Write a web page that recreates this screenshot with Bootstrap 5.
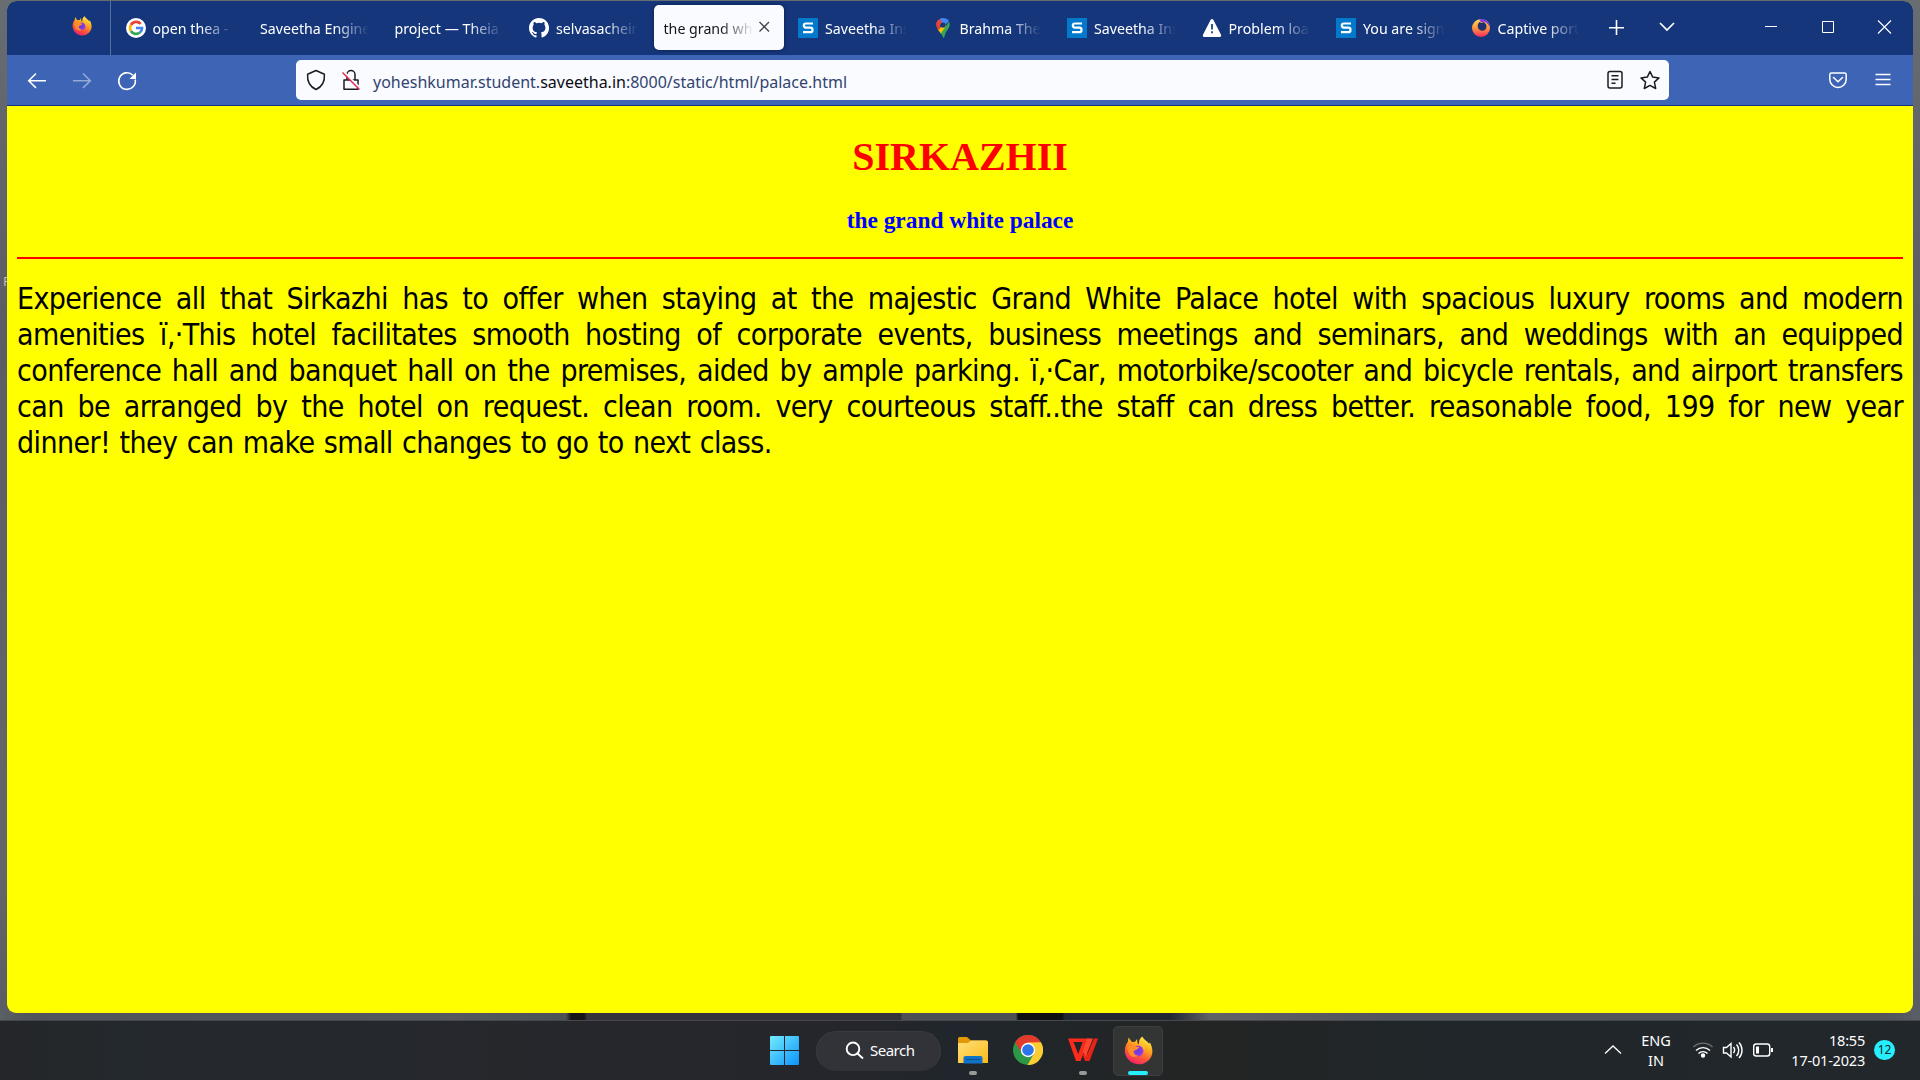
<!DOCTYPE html>
<html lang="en">
<head>
<meta charset="utf-8">
<title>the grand white palace</title>
<link href="https://cdn.jsdelivr.net/npm/bootstrap@5.3.0/dist/css/bootstrap.min.css" rel="stylesheet">
<style>
body{width:1920px;height:1080px;overflow:hidden;font-family:"Noto Sans",sans-serif;font-size:14px;color:#fff;
 background:linear-gradient(90deg,#5b6064 0,#50545b 30px,#55595e 450px,#4d5257 566px,#151517 571px,#151517 584px,#35333c 587px,#35333c 901px,#4d5156 902px,#4d5156 1016px,#101012 1018px,#101012 1062px,#212631 1065px,#212631 1170px,#606266 1210px,#52535b 1400px,#52535b 1880px,#5a5e66 1920px) 0 1012px/1920px 8px no-repeat,linear-gradient(#686d71,#5a5d65 30%,#63676c 80%,#555960)}
svg{display:block;flex:none}
.desk-label{position:absolute;left:3px;top:272px;width:4px;overflow:hidden;font-size:13px;color:#c5bfc2;line-height:18px}
.browser{margin:1px 7px 0;height:1012px;border-radius:9px;overflow:hidden;background:#ff0}
.tabstrip{height:54px;background:#15367b}
.pinned{width:104px;border-right:1px solid #58709f;padding-left:65px}
.tabs-row{padding:4px 0 0 2.500px}
.tab-item{width:134.5px;height:45px;padding:0 14px 0 12px}
.tab-text{flex:1;overflow:hidden;line-height:20px;padding-top:2px;font-size:14.2px;-webkit-mask-image:linear-gradient(90deg,#000 calc(100% - 34px),transparent);mask-image:linear-gradient(90deg,#000 calc(100% - 34px),transparent)}
.tab-item svg+.tab-text{margin-left:7px}
.tab-current{width:130px;margin:0 2.5px 0 2px;padding:0 13px 0 10px;background:#f9fbff;color:#15141a;border-radius:5px;box-shadow:0 0 4px rgba(0,0,0,.45)}
.pinned+.tabs-row{margin-left:0}
.toolbar-row{height:51px;background:#3e65b5;border-bottom:1px solid #16377b}
.urlbox{width:1373px;height:40px;background:#f9fbff;border-radius:5px;color:#32436f;font-size:16px}
.url-text{letter-spacing:0;line-height:24px;margin-left:-3px}
.url-text b{font-weight:400;color:#0c0c13}
.site{height:907px;padding:28px 10px 0;color:#000}
.site h1,.site h2{font-family:"Liberation Serif",serif;font-weight:700;margin:0;text-align:center}
.site h1{font-size:40px;line-height:46px;color:red}
.site h2{font-size:23.4px;line-height:27px;margin-top:27px;color:#00f}
.rule{height:2px;background:red;margin:23px 0 22px}
.about{font-family:"DejaVu Sans Condensed","DejaVu Sans",sans-serif;font-stretch:condensed;font-size:30px;line-height:36px;letter-spacing:-.6px;word-spacing:1.4px}
.about span{display:block;text-align:justify;text-align-last:justify}
.about span:last-child{text-align-last:left}
.taskbar{margin-top:7px;height:60px;border-top:1px solid #46484b;background:linear-gradient(90deg,#242629,#24292d 120px,#26272c 620px,#25262b 850px,#20262c 960px,#232524 1200px,#20262a 1450px,#22272b)}
.start-zone{width:1163px;padding-left:770px}
.search-pill{width:125px;height:40px;border-radius:20px;background:#313338;border:1px solid #393b3f;border-bottom-color:#303236;font-size:15px;margin-left:17px;padding-left:28px}
.search-pill span{margin-left:6px;letter-spacing:-.5px}
.apps{margin-left:7px;gap:5px}
.app{width:50px;height:50px;position:relative;border-radius:5px}
.app svg{margin-top:-1px}
.app i{position:absolute;bottom:1px;left:21px;width:8px;height:4px;border-radius:2px;background:#999}
.app.live{background:#333434;border:1px solid #3d3e3f}
.app.live i{left:14px;width:20px;bottom:0;background:#26effd}
.tray{line-height:20px;font-size:14.5px;padding:0 25px 2px 0}
.tray-lang{width:40px;text-align:center;line-height:20px;margin-left:11px}
.clock{width:90px;text-align:right;letter-spacing:-.2px}
.count{width:21px;height:20px;border-radius:10px;background:#26effd;color:#08232a;font-size:12px;line-height:20px;text-align:center;margin-left:9px}
</style>
<script src="https://cdn.jsdelivr.net/npm/bootstrap@5.3.0/dist/js/bootstrap.bundle.min.js"></script>
</head>
<body>
<svg width="0" height="0" class="position-absolute">
 <defs>
  <linearGradient id="fxBody" x1=".75" y1="0" x2=".25" y2="1"><stop offset="0" stop-color="#fff44f"/><stop offset=".35" stop-color="#ffa91e"/><stop offset=".65" stop-color="#ff5b36"/><stop offset="1" stop-color="#f0196f"/></linearGradient>
  <radialGradient id="fxGlobe"><stop offset="0" stop-color="#5b3ce0"/><stop offset="1" stop-color="#a03ae0"/></radialGradient>
  <linearGradient id="winBlue" gradientUnits="userSpaceOnUse" x1="0" y1="0" x2="29" y2="29"><stop offset="0" stop-color="#74ecff"/><stop offset="1" stop-color="#0c93fb"/></linearGradient>
  <linearGradient id="foldY" x1="0" y1="0" x2="1" y2="1"><stop offset="0" stop-color="#ffe07a"/><stop offset="1" stop-color="#fdba18"/></linearGradient>
  <linearGradient id="swirl" x1="0" y1="0" x2="0" y2="1"><stop offset="0" stop-color="#ffd84a"/><stop offset=".5" stop-color="#ff9640"/><stop offset="1" stop-color="#fa2a5c"/></linearGradient>
  <symbol id="firefox" viewBox="0 0 30 30"><path d="M19 .5c1 3 5 4.500 7 7.500l.8-1.500c4 8 3.200 14-1.300 18.500A14.500 14.500 0 0 1 1 17C.5 12 2 8.500 4 6l.7-4.500 3.500 4.800 3.300-.3L13.500 3l.5 4.500 1.500 1C15 5 16.500 2 19 .5z" fill="url(#fxBody)"/><circle cx="14.500" cy="15.500" r="5.600" fill="url(#fxGlobe)"/><path d="M3 12c3-3 7-3 10-1l3 .5-2.500 2.500c-2 .5-4 1-3.500 3 .5 2 2.500 3.500 5 3.200-4 3-9 1-10.300-3z" fill="#ff8c25"/><path d="M15 9c3 0 6 3 6 6 2-4-1-8-6-6z" fill="#ffbf2f"/></symbol>
  <symbol id="siteS" viewBox="0 0 20 20"><path fill="#0379cb" d="M0 0h20v20H0z"/><path d="M15 5.500H8q-2.200 0-2.200 2T8 9.700h4.500q2 0 2 2.200t-2 2.300H5" fill="none" stroke="#fff" stroke-width="2.200"/></symbol>
 </defs>
</svg>
<div class="desk-label">F</div>
<div class="browser">
 <div class="tabstrip d-flex">
  <div class="pinned d-flex align-items-center pb-1"><svg width="20" height="20"><use href="#firefox"/></svg></div>
  <div class="tabs-row d-flex">
   <div class="tab-item d-flex align-items-center"><svg width="20" height="20" viewBox="0 0 20 20"><circle cx="10" cy="10" r="10" fill="#fff"/><g fill="none" stroke-width="2.700"><path d="M14.700 5.800A6 6 0 0 0 4.900 7" stroke="#ea4335"/><path d="M4.900 7a6 6 0 0 0 0 6" stroke="#fbbc05"/><path d="M4.900 13a6 6 0 0 0 9 1.500" stroke="#34a853"/><path d="M10 10h6q0 3-2.100 4.500" stroke="#4285f4"/></g></svg><div class="tab-text text-nowrap">open thea - G</div></div>
   <div class="tab-item d-flex align-items-center"><div class="tab-text text-nowrap">Saveetha Engine</div></div>
   <div class="tab-item d-flex align-items-center"><div class="tab-text text-nowrap">project — Theia</div></div>
   <div class="tab-item d-flex align-items-center"><svg width="20" height="20" viewBox="0 0 16 16" fill="#fff"><path d="M8 0C3.580 0 0 3.580 0 8c0 3.540 2.290 6.530 5.470 7.590.4.070.55-.17.55-.38v-1.490c-2.010.37-2.530-.49-2.690-.94-.09-.23-.48-.94-.82-1.130-.28-.15-.68-.52-.01-.53.63-.01 1.080.58 1.230.82.72 1.210 1.870.87 2.330.66.07-.52.28-.87.51-1.070-1.780-.2-3.640-.89-3.640-3.950 0-.87.31-1.590.82-2.150-.08-.2-.36-1.020.08-2.120 0 0 .67-.21 2.200.82a7.500 7.500 0 0 1 4 0c1.530-1.040 2.200-.82 2.200-.82.44 1.100.16 1.920.08 2.120.51.56.82 1.270.82 2.150 0 3.070-1.870 3.750-3.650 3.950.29.25.54.73.54 1.480v2.200c0 .21.15.46.55.38A8 8 0 0 0 8 0z"/></svg><div class="tab-text text-nowrap">selvasachein</div></div>
   <div class="tab-item tab-current d-flex align-items-center"><div class="tab-text text-nowrap">the grand whit</div><svg class="ms-1" width="13" height="13" viewBox="0 0 13 13"><path d="M1.500 1l9.500 9.500M11 1L1.500 10.500" stroke="#42424a" stroke-width="1.300"/></svg></div>
   <div class="tab-item d-flex align-items-center"><svg width="20" height="20"><use href="#siteS"/></svg><div class="tab-text text-nowrap">Saveetha Ins</div></div>
   <div class="tab-item d-flex align-items-center"><svg width="20" height="20" viewBox="0 0 20 20"><path d="M3 7a7 7 0 0 1 5-6.500L12 7z" fill="#ea4335"/><path d="M7 .8a7 7 0 0 1 9 2.500L10.500 8z" fill="#4285f4"/><path d="M3.200 5L8 8l-3 4Q3 9 3.200 5z" fill="#ea4335"/><path d="M5 12l7-7 1 4-5 7q-1-2-3-4z" fill="#fbbc04"/><path d="M16 3.500c1.500 3.500.5 6-2 9-1.500 2-2 4-3 7.500-1 0-1.500-2.500-3-4.500z" fill="#34a853"/><circle cx="10" cy="7" r="2.600" fill="#15367b"/></svg><div class="tab-text text-nowrap">Brahma Thee</div></div>
   <div class="tab-item d-flex align-items-center"><svg width="20" height="20"><use href="#siteS"/></svg><div class="tab-text text-nowrap">Saveetha Ins</div></div>
   <div class="tab-item d-flex align-items-center"><svg width="20" height="20" viewBox="0 0 20 20"><path d="M10 2.500l7.700 15H2.300z" fill="#fff" stroke="#fff" stroke-width="3" stroke-linejoin="round"/><path d="M10 6v5.500M10 13.300v2" stroke="#15367b" stroke-width="1.700"/></svg><div class="tab-text text-nowrap">Problem load</div></div>
   <div class="tab-item d-flex align-items-center"><svg width="20" height="20"><use href="#siteS"/></svg><div class="tab-text text-nowrap">You are sign</div></div>
   <div class="tab-item d-flex align-items-center"><svg width="20" height="20" viewBox="0 0 20 20"><path d="M10 1a9 9 0 1 0 9 9c0-3-1.500-6-3.500-7.500z" fill="url(#swirl)"/><path d="M8 1.500C13-.5 19 3 18.500 10c-.5-3-2-5-4.500-6-2-.8-3 0-3 1z" fill="#8038e8"/><path d="M9.500 3.500C6 5 5.500 11 10 12.500c3 .8 5.500-1 5.500-4 0-2-1-3.500-3-4.500-1.500 2-4 1-3-.5z" fill="#23306e"/></svg><div class="tab-text text-nowrap">Captive port</div></div>
  </div>
  <svg class="ms-auto" width="320" height="54" viewBox="1593 1 320 54" fill="none" stroke="#fff"><path d="M1609 27.700h15M1616.500 20v15" stroke-width="1.600"/><path d="M1660 23l7 7 7-7" stroke-width="1.700"/><path d="M1765 26.500h12" stroke-width="1"/><path d="M1822.500 21.500h11v11h-11z" stroke-width="1"/><path d="M1878 20.500l13 13m0-13l-13 13" stroke-width="1.100"/></svg>
 </div>
 <div class="toolbar-row d-flex align-items-center">
  <svg width="289" height="50" viewBox="7 55 289 50" fill="none" stroke="#fff" stroke-width="1.500"><path d="M46 80.700H29M36 73.500l-7.300 7.200 7.300 7.200"/><path opacity=".45" d="M73 80.700h17M83 73.500l7.300 7.200-7.300 7.200"/><path d="M135.200 79.500a8.300 8.300 0 1 1-2.300-4.300" stroke-width="1.600"/><path d="M136 72.500v6.500h-6.500z" fill="#fff" stroke="none"/></svg>
  <div class="urlbox d-flex align-items-center">
   <svg width="76" height="40" viewBox="296 60 76 40" fill="none" stroke="#1c1b22" stroke-width="1.500" stroke-linejoin="round"><path d="M316 70.500l8.400 3.700c.5 6.500-1.400 12-8.400 15.300-7-3.300-8.900-8.800-8.400-15.300z"/><path d="M344 80h14v9.300h-14zM347 80v-5.500a4 4 0 0 1 8 0V80"/><path d="M343.500 71.500l17 17" stroke="#f9fbff" stroke-width="2"/><path d="M342.500 72.500l17 17" stroke="#e8234f"/></svg>
   <div class="url-text text-nowrap ps-1 pt-1">yoheshkumar.student.<b>saveetha.in</b>:8000/static/html/palace.html</div>
   <svg class="ms-auto" width="69" height="40" viewBox="1600 60 69 40" fill="none" stroke="#1c1b22" stroke-width="1.500" stroke-linejoin="round"><rect x="1608" y="71.500" width="14" height="16.500" rx="2"/><path d="M1611.500 75.700h7M1611.500 79.500h7M1611.500 83.300h4"/><path d="M1650 71.500l2.700 5.600 6.300.8-4.600 4.200 1.300 6.400-5.700-3.100-5.700 3.100 1.300-6.400-4.600-4.200 6.300-.8z"/></svg>
  </div>
  <svg class="ms-auto" width="100" height="50" viewBox="1813 55 100 50" fill="none" stroke="#fff" stroke-width="1.500"><path d="M1831.500 73h13q1.700 0 1.700 1.700v4.500a8.200 8.200 0 0 1-16.400 0v-4.500q0-1.700 1.700-1.700zM1833.500 77.500l4.500 4.200 4.500-4.200" stroke-linecap="round" stroke-linejoin="round"/><path d="M1875.500 74.500h15M1875.500 79.500h15M1875.500 84.500h15"/></svg>
 </div>
 <main class="site">
  <h1>SIRKAZHII</h1>
  <h2>the grand white palace</h2>
  <div class="rule"></div>
  <p class="about mb-0"><span>Experience all that Sirkazhi has to offer when staying at the majestic Grand White Palace hotel with spacious luxury rooms and modern</span>
  <span>amenities ï‚·This hotel facilitates smooth hosting of corporate events, business meetings and seminars, and weddings with an equipped</span>
  <span>conference hall and banquet hall on the premises, aided by ample parking. ï‚·Car, motorbike/scooter and bicycle rentals, and airport transfers</span>
  <span>can be arranged by the hotel on request. clean room. very courteous staff..the staff can dress better. reasonable food, 199 for new year</span>
  <span>dinner! they can make small changes to go to next class.</span></p>
 </main>
</div>
<footer class="taskbar d-flex align-items-center">
 <div class="start-zone d-flex align-items-center">
  <svg width="29" height="29" viewBox="0 0 29 29"><path fill="url(#winBlue)" d="M1 0h13v14H0V1q0-1 1-1zM15 0h13q1 0 1 1v13H15zM0 15h14v14H1q-1 0-1-1zM15 15h14v13q0 1-1 1H15z"/></svg>
  <div class="search-pill d-flex align-items-center"><svg width="19" height="19" viewBox="0 0 19 19" fill="none" stroke="#fff" stroke-width="1.900"><circle cx="8" cy="7.800" r="6.300"/><path d="M12.500 12.500l5.500 5"/></svg><span>Search</span></div>
  <div class="apps d-flex">
   <div class="app d-flex align-items-center justify-content-center"><svg width="30" height="27" viewBox="0 0 30 27"><path d="M0 1.500Q0 0 1.500 0H9l4 3.500h15q2 0 2 2V12H0z" fill="#e19a06"/><path d="M0 6h10l3-2.500h15q2 0 2 2V26H0z" fill="url(#foldY)"/><path d="M5.500 26.500V21q0-2 2-2h15q2 0 2 2v5.500z" fill="#1173c7"/><path d="M8 22.500h14" stroke="#0a4f94" stroke-width="1"/></svg><i></i></div>
   <div class="app d-flex align-items-center justify-content-center"><svg width="30" height="30" viewBox="0 0 30 30"><circle cx="15" cy="15" r="15" fill="#2b9847"/><path d="M2 7.500A15 15 0 0 1 28 7.500L15 9 9.500 19z" fill="#e23b2e"/><path d="M28 7.500A15 15 0 0 1 14.500 30L21 18.500 15 8z" fill="#fccd32"/><path d="M15 7.500h13l-7.500 10z" fill="#fccd32"/><circle cx="15" cy="15" r="7.200" fill="#fff"/><circle cx="15" cy="15" r="5.800" fill="#2c76ea"/></svg></div>
   <div class="app d-flex align-items-center justify-content-center"><svg width="30" height="24" viewBox="0 0 30 24"><path d="M0 .5h17l-1.500 3.500H5.500l4.700 12L16 .5h5.500L12.500 23H8z" fill="#fb2b1c"/><path d="M30 .5h-4L19.300 16l-1.800-4-2.500 5.500 2 5.500h4.500z" fill="#e92416"/><path d="M19 .5h6L17.500 19 15 13.500z" fill="#ff4430"/></svg><i></i></div>
   <div class="app live d-flex align-items-center justify-content-center"><svg width="29" height="29"><use href="#firefox"/></svg><i></i></div>
  </div>
 </div>
 <div class="tray ms-auto d-flex align-items-center">
  <svg width="24" height="20" viewBox="1600 1040 24 20" fill="none" stroke="#fff" stroke-width="1.300"><path d="M1604 1053.500l8-7.500 8 7.500"/></svg>
  <div class="tray-lang">ENG<br>IN</div>
  <svg style="margin-left:15px" width="84" height="24" viewBox="1690 1038 84 24" fill="none" stroke="#fff" stroke-width="1.400"><path d="M1692.500 1047a13.500 13.500 0 0 1 19 0" opacity=".35"/><path d="M1695 1050.500a10 10 0 0 1 14 0M1697.500 1053.500a6.300 6.300 0 0 1 9 0"/><circle cx="1702" cy="1055.500" r="1.500" fill="#fff"/><path d="M1722.500 1047.500h3l4.500-4v13.500l-4.500-4h-3z"/><path d="M1732.500 1047a5 5 0 0 1 0 6M1735.500 1044.500a8.500 8.500 0 0 1 0 11.500M1738 1042.500a11.500 11.500 0 0 1 0 15.500"/><rect x="1752.700" y="1044" width="16" height="12" rx="2.500"/><path d="M1755 1046.500h3v7h-3z" fill="#fff" stroke="none"/><path d="M1771 1048v4" stroke-width="2"/></svg>
  <div class="clock">18:55<br>17-01-2023</div>
  <div class="count">12</div>
 </div>
</footer>
</body>
</html>
